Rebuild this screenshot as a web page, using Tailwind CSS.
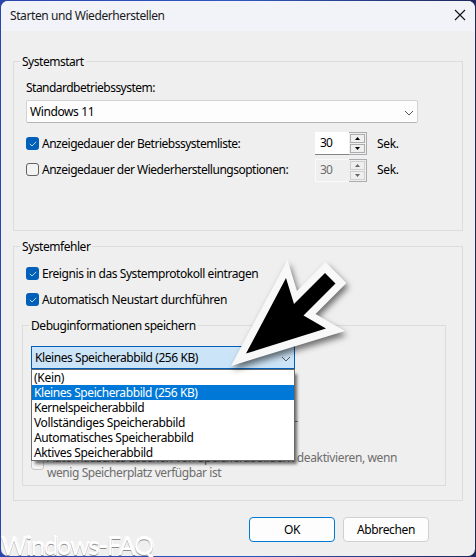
<!DOCTYPE html>
<html lang="de">
<head>
<meta charset="utf-8">
<title>Starten und Wiederherstellen</title>
<script src="https://cdn.jsdelivr.net/npm/@tailwindcss/browser@4"></script>
</head>
<body class="w-[476px] h-[557px] overflow-hidden font-['Noto_Sans','Open_Sans',sans-serif] text-[12px] leading-[16px] text-black">
<div class="w-[476px] h-[557px] p-px bg-linear-to-r from-[#2b45ae] via-[#2f58bd] to-[#20285c]">
<main class="relative w-[474px] h-[555px] rounded-[7px] overflow-hidden bg-[#efefef] whitespace-nowrap">
  <header class="h-[30px] bg-[#f1f3f9] flex justify-between pl-[9px] pr-[9px] pt-[7px]">
    <h1 class="tracking-[-0.41px] text-[#1a1a1a]">Starten und Wiederherstellen</h1>
    <svg class="w-[12px] h-[12px] mt-px" viewBox="0 0 12 12" fill="none" stroke="#111" stroke-width="1.1"><path d="M1 1l10 10M11 1L1 11"/></svg>
  </header>

  <section class="mt-[30px] ml-[12px] w-[450px] h-[170px] border border-[#dcdcdc]">
    <h2 class="w-fit h-[16px] leading-[18px] -mt-[9px] ml-[6px] pl-[2px] pr-[2px] bg-[#efefef] tracking-[-0.47px]">Systemstart</h2>
    <div class="pl-[12px] pt-[11px]">
      <p class="tracking-[-0.52px]">Standardbetriebssystem:</p>
      <div class="mt-[4px] w-[392px] h-[23px] bg-[#fdfdfd] border border-[#d2d2d2] border-b-[#b5b5b5] rounded-[2px] flex justify-between pl-[3px] pr-[3px] pt-[3px]">
        <span class="tracking-[-0.4px]">Windows 11</span>
        <svg class="w-[10px] h-[6px] mt-[6px]" viewBox="0 0 10 6" fill="none" stroke="#555"><path d="M1 1l4 4 4-4"/></svg>
      </div>
      <div class="mt-[9px] h-[23px] flex">
        <span class="mt-[5px] w-[13px] h-[13px] rounded-[3px] bg-[#005fb8] grid place-items-center"><svg class="w-[8px] h-[6px]" viewBox="0 0 8 6" fill="none" stroke="#b9d4ec"><path d="M.8 2.8L3 5l4.2-4.2"/></svg></span>
        <span class="ml-[3px] mt-[4px] w-[273px] tracking-[-0.49px]">Anzeigedauer der Betriebssystemliste:</span>
        <span class="w-[34px] h-[23px] bg-white border-b border-[#858585] pl-[5px] pt-[3px] tracking-[-0.9px]">30</span>
        <span class="w-[18px] h-[23px] border-y border-r border-[#ababaf] p-px flex flex-col gap-px">
          <span class="w-[15px] h-[9px] border border-[#adadad] bg-[#efefef] grid place-items-center"><svg class="w-[5px] h-[3px]" viewBox="0 0 5 3"><path d="M0 3L2.5 0 5 3z"/></svg></span>
          <span class="w-[15px] h-[9px] border border-[#adadad] bg-[#efefef] grid place-items-center"><svg class="w-[5px] h-[3px]" viewBox="0 0 5 3"><path d="M0 0h5L2.5 3z"/></svg></span>
        </span>
        <span class="ml-[10px] mt-[4px] tracking-[-0.3px]">Sek.</span>
      </div>
      <div class="mt-[4px] h-[23px] flex">
        <span class="mt-[4px] w-[13px] h-[13px] rounded-[3px] border border-[#626262] bg-[#f3f3f3]"></span>
        <span class="ml-[3px] mt-[3px] w-[273px] tracking-[-0.49px]">Anzeigedauer der Wiederherstellungsoptionen:</span>
        <span class="w-[34px] h-[23px] border border-r-0 border-[#fafafa] pl-[4px] pt-[2px] tracking-[-0.9px] text-[#6d6d6d]">30</span>
        <span class="w-[18px] h-[23px] border-y border-r border-[#ababaf] p-px flex flex-col gap-px">
          <span class="w-[15px] h-[9px] border border-[#cfcfcf] bg-[#efefef] grid place-items-center"><svg class="w-[5px] h-[3px]" viewBox="0 0 5 3" fill="#666"><path d="M0 3L2.5 0 5 3z"/></svg></span>
          <span class="w-[15px] h-[9px] border border-[#cfcfcf] bg-[#efefef] grid place-items-center"><svg class="w-[5px] h-[3px]" viewBox="0 0 5 3" fill="#666"><path d="M0 0h5L2.5 3z"/></svg></span>
        </span>
        <span class="ml-[10px] mt-[3px] tracking-[-0.3px]">Sek.</span>
      </div>
    </div>
  </section>

  <section class="mt-[15px] ml-[12px] w-[450px] h-[255px] border border-[#dcdcdc]">
    <h2 class="w-fit h-[16px] leading-[18px] -mt-[9px] ml-[6px] pl-[2px] pr-[2px] bg-[#efefef] tracking-[-0.46px]">Systemfehler</h2>
    <div class="pl-[12px] pt-[11px] flex flex-col gap-[10px]">
      <div class="h-[16px] flex gap-[3px]">
        <span class="mt-[2px] w-[13px] h-[13px] rounded-[3px] bg-[#005fb8] grid place-items-center"><svg class="w-[8px] h-[6px]" viewBox="0 0 8 6" fill="none" stroke="#b9d4ec"><path d="M.8 2.8L3 5l4.2-4.2"/></svg></span>
        <span class="mt-px tracking-[-0.43px]">Ereignis in das Systemprotokoll eintragen</span>
      </div>
      <div class="h-[16px] flex gap-[3px]">
        <span class="mt-[2px] w-[13px] h-[13px] rounded-[3px] bg-[#005fb8] grid place-items-center"><svg class="w-[8px] h-[6px]" viewBox="0 0 8 6" fill="none" stroke="#b9d4ec"><path d="M.8 2.8L3 5l4.2-4.2"/></svg></span>
        <span class="mt-px tracking-[-0.38px]">Automatisch Neustart durchführen</span>
      </div>
    </div>
    <div class="mt-[18px] ml-[8px] w-[424px] h-[161px] border border-[#dcdcdc] pl-[8px]">
      <h3 class="w-fit h-[16px] leading-[18px] -mt-[9px] -ml-[2px] pl-[2px] pr-[2px] bg-[#efefef] tracking-[-0.45px]">Debuginformationen speichern</h3>
      <div class="relative mt-[13px] w-[264px] h-[23px] bg-[#cce4f7] border border-[#005fb8] flex justify-between pl-[3px] pr-[3px] pt-[3px]">
        <span class="tracking-[-0.43px]">Kleines Speicherabbild (256 KB)</span>
        <svg class="w-[10px] h-[6px] mt-[6px]" viewBox="0 0 10 6" fill="none" stroke="#555"><path d="M1 1l4 4 4-4"/></svg>
        <ul class="absolute z-10 -left-px top-[22px] w-[264px] h-[92px] bg-white border border-[#6a6a6a] leading-[15px] shadow-[3px_4px_3px_-1px_rgba(0,0,0,0.55)]">
          <li class="h-[15px] pl-[2px] tracking-[-0.3px]">(Kein)</li>
          <li class="h-[15px] pl-[2px] bg-[#0078d7] text-white tracking-[-0.41px]">Kleines Speicherabbild (256 KB)</li>
          <li class="h-[15px] pl-[2px] tracking-[-0.45px]">Kernelspeicherabbild</li>
          <li class="h-[15px] pl-[2px] tracking-[-0.38px]">Vollständiges Speicherabbild</li>
          <li class="h-[15px] pl-[2px] tracking-[-0.38px]">Automatisches Speicherabbild</li>
          <li class="h-[15px] pl-[2px] tracking-[-0.36px]">Aktives Speicherabbild</li>
        </ul>
      </div>
      <div class="mt-[52px] w-[267px] h-px bg-[#777]"></div>
      <div class="mt-[28px] flex text-[#6d6d6d]">
        <span class="mt-[7px] w-[13px] h-[13px] rounded-[3px] border border-[#c6c6c6] bg-[#f3f3f3]"></span>
        <p class="ml-[3px] leading-[15px]"><span class="block tracking-[-0.37px]">Automatisches Löschen von Speicherabbildern deaktivieren, wenn</span><span class="block tracking-[-0.43px]">wenig Speicherplatz verfügbar ist</span></p>
      </div>
    </div>
  </section>

  <footer class="mt-[16px] ml-[248px] flex gap-[8px] text-center">
    <button class="w-[86px] h-[25px] rounded-[4px] border border-[#0078d4] bg-[#fdfdfd] tracking-[-0.3px]">OK</button>
    <button class="w-[86px] h-[25px] rounded-[4px] border border-[#d0d0d0] bg-[#fdfdfd] tracking-[-0.35px]">Abbrechen</button>
  </footer>

  <svg class="absolute left-[219px] top-[254px] w-[140px] h-[125px] z-20 overflow-visible" viewBox="220 255 140 125">
    <path class="drop-shadow-[2px_4px_3px_rgba(0,0,0,0.55)]" fill="#f8f8f8" d="M287.500 260L231 366 345 331 315.500 314 346.500 283 325.500 262 297 291z"/>
    <path d="M286 278L246 353.500 326 328.500 303.500 315.500 335.500 283.500 325 273 294 304z"/>
  </svg>
</main>
</div>
<div class="absolute left-[1px] top-[533px] font-['Lato',sans-serif] text-[25px] leading-[24px] tracking-[-0.95px] text-white whitespace-nowrap [text-shadow:0_1px_0_#8c8c8c,0_-1px_0_#fff,1px_0_0_#fff] z-30">Windows-FAQ</div>
</body>
</html>
